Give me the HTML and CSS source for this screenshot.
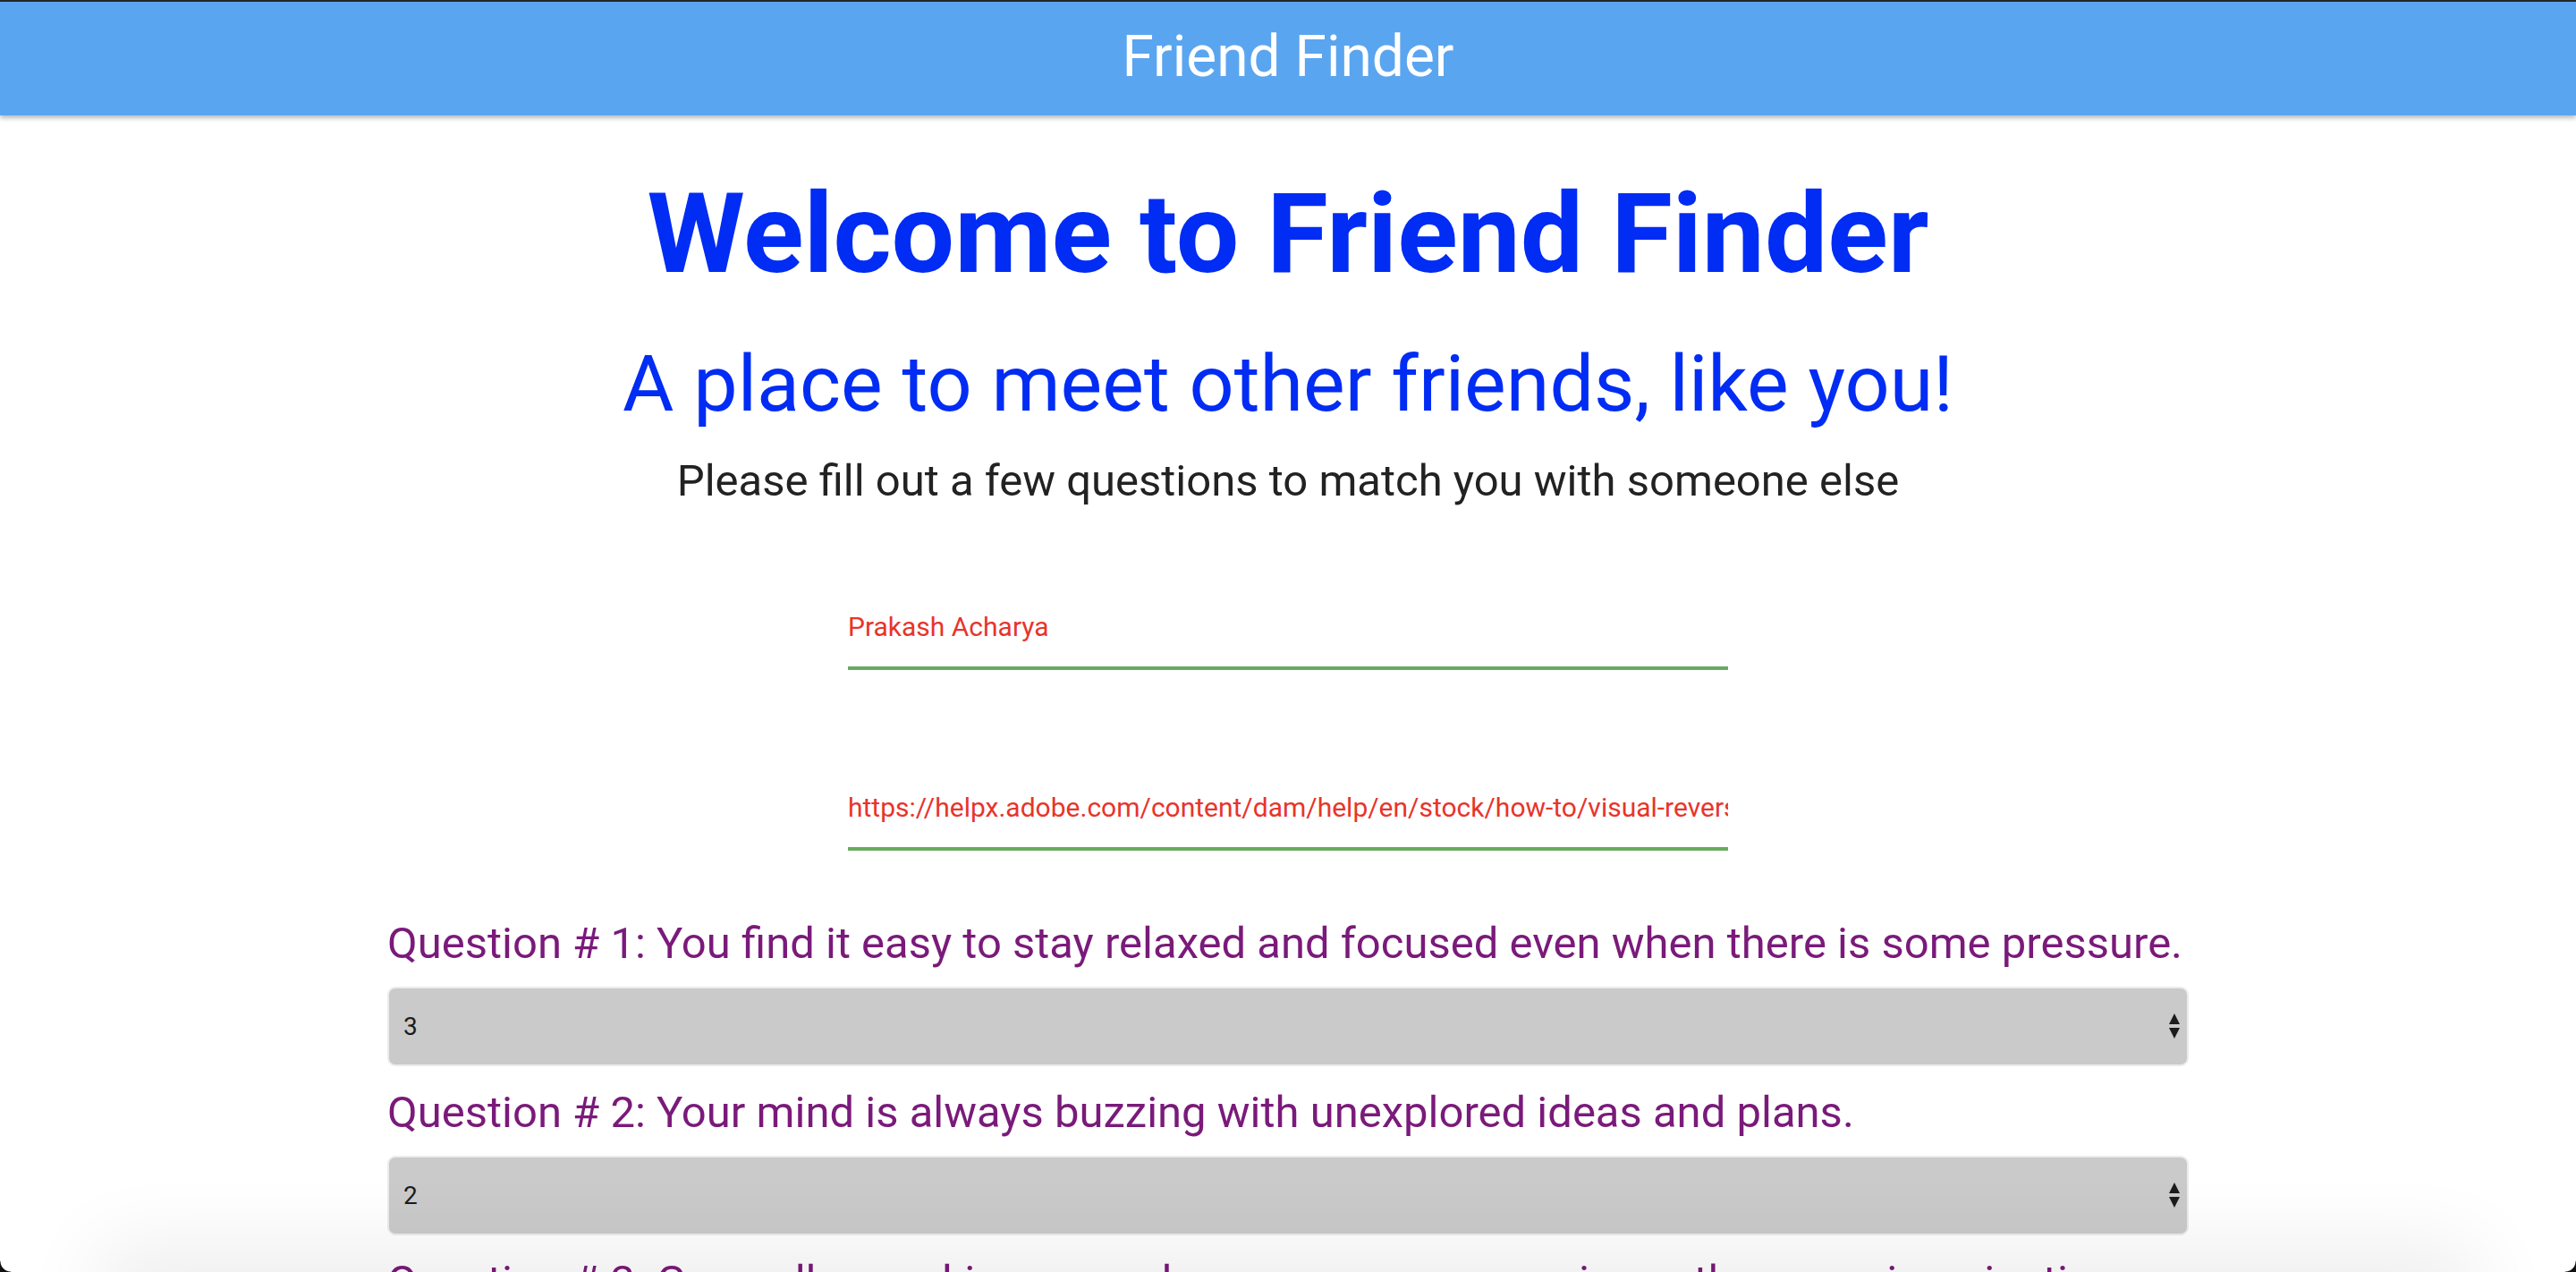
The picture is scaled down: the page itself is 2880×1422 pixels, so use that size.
FILE: index.html
```html
<!DOCTYPE html>
<html lang="en">
<head>
<meta charset="utf-8">
<title>Friend Finder</title>
<link rel="stylesheet" href="styles.css">
</head>
<body>
<nav class="navbar"><span class="brand">Friend Finder</span></nav>
<main class="main">
  <h1 class="title">Welcome to Friend Finder</h1>
  <h2 class="subtitle">A place to meet other friends, like you!</h2>
  <p class="lead">Please fill out a few questions to match you with someone else</p>
  <form class="survey">
    <div class="fields">
      <input class="field field-name" type="text" value="Prakash Acharya">
      <input class="field field-photo" type="text" value="https://helpx.adobe.com/content/dam/help/en/stock/how-to/visual-reverse-image-search/jcr_content/main-pars/image/visual-reverse-image-search-v2_intro.jpg">
    </div>
    <div class="questions">
      <label class="q-label">Question # 1: You find it easy to stay relaxed and focused even when there is some pressure.</label>
      <div class="select-wrap">
        <select class="q-select"><option>1</option><option>2</option><option selected>3</option><option>4</option><option>5</option></select>
        <svg class="arrows" width="14" height="28" viewBox="0 0 14 28"><path d="M7 0 L13 12 L1 12 Z" fill="#1c1c1c"/><path d="M1 16 L13 16 L7 28 Z" fill="#1c1c1c"/></svg>
      </div>
      <label class="q-label">Question # 2: Your mind is always buzzing with unexplored ideas and plans.</label>
      <div class="select-wrap">
        <select class="q-select"><option>1</option><option selected>2</option><option>3</option><option>4</option><option>5</option></select>
        <svg class="arrows" width="14" height="28" viewBox="0 0 14 28"><path d="M7 0 L13 12 L1 12 Z" fill="#1c1c1c"/><path d="M1 16 L13 16 L7 28 Z" fill="#1c1c1c"/></svg>
      </div>
      <label class="q-label">Question # 3: Generally speaking, you rely more on your experience than your imagination.</label>
      <div class="select-wrap">
        <select class="q-select"><option selected>1</option><option>2</option><option>3</option><option>4</option><option>5</option></select>
        <svg class="arrows" width="14" height="28" viewBox="0 0 14 28"><path d="M7 0 L13 12 L1 12 Z" fill="#1c1c1c"/><path d="M1 16 L13 16 L7 28 Z" fill="#1c1c1c"/></svg>
      </div>
    </div>
  </form>
</main>
<div class="window-shadow"></div>
<div class="corner corner-left"></div>
<div class="corner corner-right"></div>
</body>
</html>
```

FILE: styles.css
```css
* { box-sizing: border-box; }
html, body { margin: 0; padding: 0; background: #fff; }
body {
  font-family: Roboto, "Liberation Sans", Arial, sans-serif;
  color: #222;
  overflow: hidden;
  height: 1422px;
}
.navbar {
  display: block;
  height: 129px;
  border-top: 2px solid #262626;
  background: #5aa5ef;
  padding-top: 23px;
  text-align: center;
  box-shadow: 0 3px 5px rgba(0,0,0,0.28);
  position: relative;
  z-index: 2;
}
.brand {
  color: #fff;
  font-size: 64px;
  line-height: 78px;
  font-weight: 400;
}
.main { text-align: center; }
.title {
  margin: 58px 0 0;
  font-size: 125px;
  line-height: 150px;
  font-weight: 700;
  color: #002cf4;
}
.subtitle {
  margin: 40px 0 0;
  font-size: 88px;
  line-height: 103px;
  font-weight: 400;
  color: #002cf4;
}
.lead {
  margin: 29px 0 0;
  font-size: 49px;
  line-height: 57px;
  color: #222;
}
.survey { margin-top: 103px; }
.fields {
  width: 984px;
  margin: 0 auto;
  display: flex;
  flex-direction: column;
  gap: 122px;
}
.field {
  display: block;
  width: 100%;
  height: 80px;
  padding: 14px 0 27px;
  border: 0;
  border-bottom: 4px solid #67ab5e;
  outline: none;
  background: transparent;
  font-family: Roboto, "Liberation Sans", Arial, sans-serif;
  font-size: 30px;
  line-height: 35px;
  color: #e8342a;
}
.questions {
  width: 2014px;
  margin: 76px auto 0;
  text-align: left;
  display: flex;
  flex-direction: column;
}
.q-label {
  display: block;
  font-size: 49px;
  line-height: 56px;
  color: #7a1a7a;
}
.select-wrap {
  position: relative;
  margin: 20px 0 24px;
}
.q-select {
  display: block;
  width: 100%;
  height: 89px;
  -webkit-appearance: none;
  appearance: none;
  background: #cacaca;
  border: 2px solid #ececec;
  border-radius: 9px;
  padding: 0 0 0 16px;
  font-family: Roboto, "Liberation Sans", Arial, sans-serif;
  font-size: 28px;
  color: #1c1c1c;
  outline: none;
}
.arrows {
  position: absolute;
  right: 9px;
  top: 30px;
  pointer-events: none;
}
.window-shadow {
  position: fixed;
  left: 140px;
  right: 140px;
  bottom: -60px;
  height: 60px;
  box-shadow: 0 0 90px 30px rgba(0,0,0,0.07);
  z-index: 5;
}
.corner {
  position: fixed;
  bottom: 0;
  width: 12px;
  height: 12px;
  z-index: 6;
}
.corner-left {
  left: 0;
  background: radial-gradient(circle at 12px 0, transparent 11px, #111 12px);
}
.corner-right {
  right: 0;
  background: radial-gradient(circle at 0 0, transparent 11px, #111 12px);
}
```
